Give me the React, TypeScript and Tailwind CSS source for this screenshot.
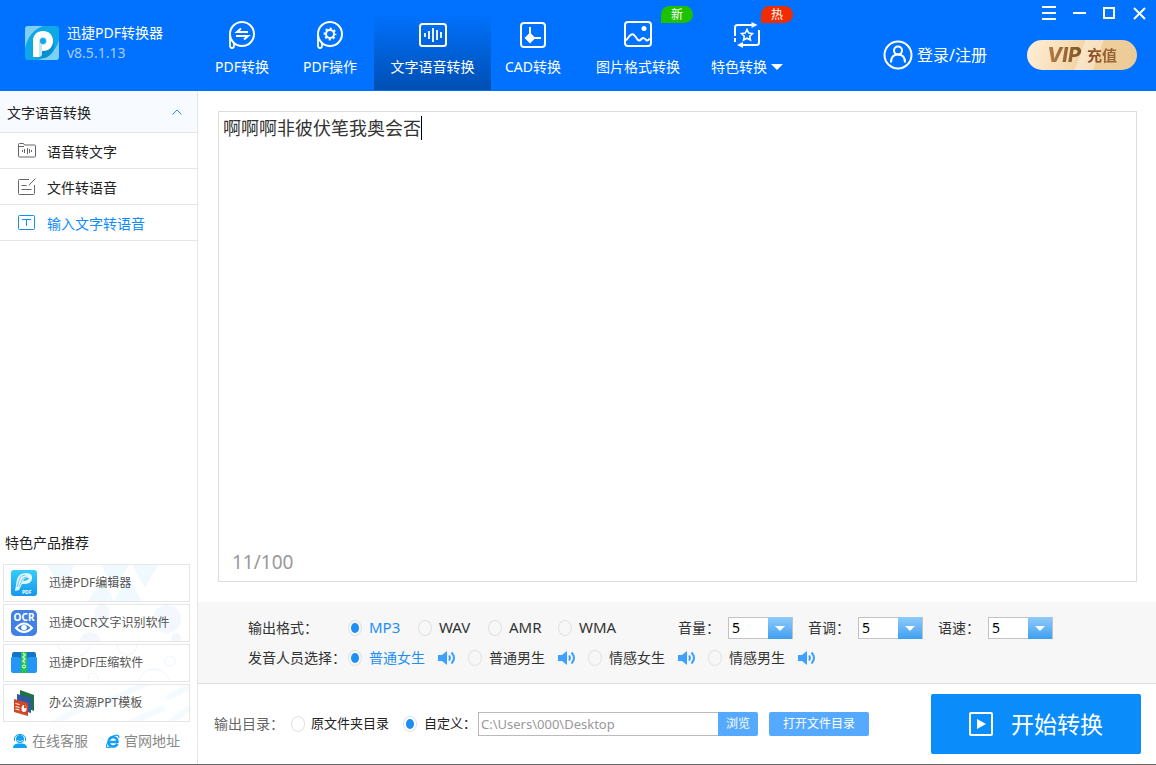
import React, { useState } from 'react'
import clsx from 'clsx'

/* ------------------------------ icons ------------------------------ */
const stroke = { fill: 'none', stroke: 'currentColor', strokeWidth: 2 }

function BubbleIcon({ children }: { children: React.ReactNode }) {
  return (
    <svg width="28" height="28" viewBox="0 0 28 28" {...stroke}>
      <circle cx="14" cy="13" r="12" />
      <path d="M2 13v11.500q0 2.500 2 2.500t2-2.500V22" strokeWidth="1.800" />
      {children}
    </svg>
  )
}

function ConvertIcon() {
  return (
    <BubbleIcon>
      <path d="M20 11H9l4-3.500M8 15h12l-4 3.500" />
    </BubbleIcon>
  )
}

function OperateIcon() {
  return (
    <BubbleIcon>
      <circle cx="14" cy="13" r="4" />
      <circle cx="14" cy="13" r="5.500" strokeWidth="1.800" strokeDasharray="2.160 2.160" strokeDashoffset="1.080" />
    </BubbleIcon>
  )
}

function VoiceIcon() {
  return (
    <svg width="28" height="28" viewBox="0 0 28 28" {...stroke}>
      <rect x="1" y="3" width="26" height="22" rx="2.500" />
      <path d="M6 12v4M10 10v8M14 7v14M18 9v10M22 11v6" strokeWidth="1.800" />
    </svg>
  )
}

function CadIcon() {
  return (
    <svg width="28" height="28" viewBox="0 0 28 28" {...stroke}>
      <rect x="2" y="2" width="24" height="24" rx="3" />
      <path d="M11 6v15M6 17h16" />
      <path d="M11 13l4 4-4 4-4-4z" fill="currentColor" />
    </svg>
  )
}

function PictureIcon() {
  return (
    <svg width="28" height="28" viewBox="0 0 28 28" {...stroke}>
      <rect x="1" y="1" width="26" height="24" rx="3" />
      <circle cx="20" cy="7.500" r="2.500" fill="currentColor" stroke="none" />
      <path d="M2 19.500l4-5c2-2 3.500-1.500 5 .5l2.500 3.500c1.500 1.700 2.500 1.200 4-.5 1.500-1.500 2.800-1 4 .5 1.500 1.500 2.500 1.500 4-1" />
    </svg>
  )
}

function FeatureIcon() {
  return (
    <svg width="28" height="28" viewBox="0 0 28 28" {...stroke}>
      <path d="M2 15V6.500Q2 4 4.500 4H19M26 9v12.500q0 2.500-2.500 2.500H9M2 17v4" />
      <path d="M18.500 1l6 3-6 3zM10 21v6l-6-3z" fill="currentColor" stroke="none" />
      <path d="M14 8.500l1.700 3.500 3.800.5-2.800 2.700.7 3.800-3.400-1.800L10.600 19l.7-3.800-2.800-2.700 3.800-.5z" strokeWidth="1.600" />
    </svg>
  )
}

function FolderVoiceIcon() {
  return (
    <svg width="18" height="18" viewBox="0 0 18 18" fill="none" stroke="currentColor">
      <path d="M.5 14V2.500q0-1 1-1h4l1 1.500h10q1 0 1 1v10q0 1-1 1h-15q-1 0-1-1M1 4.500h5" />
      <path d="M4.500 8v2M6.500 7v4M9.500 6v6M11.500 7v4M13.500 8v2" />
    </svg>
  )
}

function FileEditIcon() {
  return (
    <svg width="18" height="18" viewBox="0 0 18 18" fill="none" stroke="currentColor">
      <path d="M11 1.500H1.500q-1 0-1 1v13q0 1 1 1h14q1 0 1-1V7M3.500 7.500h5M3.500 11.500h10M11 7.500l1-1.500 5.500-5.500" />
    </svg>
  )
}

function TextInputIcon() {
  return (
    <svg width="18" height="18" viewBox="0 0 18 18" fill="none" stroke="currentColor">
      <rect x=".5" y="1.500" width="16" height="14" rx="1" />
      <path d="M4 5.500h9M8.500 5.500V12" />
    </svg>
  )
}

function SpeakerIcon() {
  return (
    <svg width="18" height="14" viewBox="0 0 18 14" fill="none" stroke="#3da0ff" strokeWidth="2">
      <path d="M0 4h4l5-4v14l-5-4H0z" fill="#3da0ff" stroke="none" />
      <path d="M11 4.500q1.800 2.500 0 5M13.500 1.500q5 5.500 0 11" />
    </svg>
  )
}

function Logo() {
  return (
    <svg width="34" height="34" viewBox="0 0 34 34">
      <rect width="34" height="34" rx="3" fill="#10a7e6" />
      <path d="M0 3q0-3 3-3h15Q4 5 0 22zM34 14v17q0 3-3 3H14q16-5 20-20z" fill="#7bd0f4" />
      <path d="M17 25q11-2 11-10 4 12-8 17h-6z" fill="#078fd0" />
      <path d="M8 31V15c0-6 4-10 10-10s10 4 10 10-4 10-10 10h-1v2q0 4-4 4z" fill="#fff" />
      <path d="M14 31V15q0-4 4-4t4 4-4 4h-1v8q0 3-3 4z" fill="#c4e7f8" />
      <circle cx="18" cy="15" r="3" fill="#10a7e6" />
    </svg>
  )
}

/* ------------------------------ header ------------------------------ */
const TABS = [
  { label: 'PDF转换', icon: <ConvertIcon />, width: 'w-[88px]' },
  { label: 'PDF操作', icon: <OperateIcon />, width: 'w-[88px]' },
  { label: '文字语音转换', icon: <VoiceIcon />, width: 'w-[117px]' },
  { label: 'CAD转换', icon: <CadIcon />, width: 'w-[84px]' },
  { label: '图片格式转换', icon: <PictureIcon />, width: 'w-[126px]', badge: '新', badgeClass: 'right-2 bg-[#1dc100]' },
  { label: '特色转换', icon: <FeatureIcon />, width: 'w-[92px]', badge: '热', badgeClass: 'right-0 bg-[#f02c00]', more: true },
]

const windowButton = 'flex h-[26px] w-[30px] items-center justify-center'

function Header() {
  const [tab, setTab] = useState('文字语音转换')

  return (
    <header className="flex h-[91px] bg-[#0072ff] text-white">
      <div className="flex w-[198px] shrink-0 gap-2 pl-[25px] pt-[23px]">
        <div className="pt-[3px]">
          <Logo />
        </div>
        <div>
          <h1 className="text-sm leading-5">迅捷PDF转换器</h1>
          <p className="text-sm leading-5 text-[#a9ccff]">v8.5.1.13</p>
        </div>
      </div>

      <nav className="flex shrink-0">
        {TABS.map((t) => (
          <button
            key={t.label}
            type="button"
            onClick={() => setTab(t.label)}
            className={clsx(
              'relative flex h-[90px] flex-col items-center gap-2 pt-[21px] text-sm leading-5',
              t.width,
              tab === t.label && 'bg-linear-to-b from-[#0072ff] from-15% to-[#004fb2]'
            )}
          >
            {t.icon}
            <span className="flex items-center gap-1 whitespace-nowrap">
              {t.label}
              {t.more && (
                <svg width="12" height="6" viewBox="0 0 12 6" fill="currentColor">
                  <path d="M0 0h12L6 6z" />
                </svg>
              )}
            </span>
            {t.badge && (
              <span
                className={clsx(
                  'absolute top-1.5 h-[17px] w-8 rounded-full rounded-bl-none text-xs leading-[17px]',
                  t.badgeClass
                )}
              >
                {t.badge}
              </span>
            )}
          </button>
        ))}
      </nav>

      <div className="ml-auto flex flex-col items-end gap-[14px]">
        <div className="flex pr-0.5">
          <button type="button" aria-label="菜单" className={windowButton}>
            <svg width="14" height="14" viewBox="0 0 14 14" {...stroke}>
              <path d="M0 1h14M0 7h14M0 13h14" />
            </svg>
          </button>
          <button type="button" aria-label="最小化" className={windowButton}>
            <svg width="14" height="14" viewBox="0 0 14 14" {...stroke}>
              <path d="M1 7h13" />
            </svg>
          </button>
          <button type="button" aria-label="最大化" className={windowButton}>
            <svg width="14" height="14" viewBox="0 0 14 14" {...stroke}>
              <path d="M2 2h10v10H2z" />
            </svg>
          </button>
          <button type="button" aria-label="关闭" className={windowButton}>
            <svg width="14" height="14" viewBox="0 0 14 14" {...stroke}>
              <path d="M2 2l11 11M13 2L2 13" />
            </svg>
          </button>
        </div>

        <div className="flex items-center gap-10 pr-[19px]">
          <a href="#login" className="flex items-center gap-1 whitespace-nowrap text-base leading-6">
            <svg width="30" height="30" viewBox="0 0 30 30" {...stroke}>
              <circle cx="15" cy="15" r="13.500" />
              <circle cx="15" cy="10.500" r="4" />
              <path d="M8 22.500q0-8 7-8t7 8" />
            </svg>
            登录/注册
          </a>
          <button
            type="button"
            className="flex h-[30px] w-[110px] items-center justify-center gap-1 rounded-full bg-[linear-gradient(110deg,#ffefd8_0%,#f3d6a9_48%,#f9e5c8_49%,#f6dfbc_63%,#efd09d_64%,#eacb96_100%)]"
          >
            <span className="bg-linear-to-r from-[#b67d45] to-[#7a5428] bg-clip-text pr-0.5 font-[Inter] text-xl font-extrabold italic leading-6 text-transparent">
              VIP
            </span>
            <span className="bg-linear-to-r from-[#8a4a28] to-[#9a6a38] bg-clip-text text-[15px] font-bold leading-6 text-transparent">
              充值
            </span>
          </button>
        </div>
      </div>
    </header>
  )
}

/* ------------------------------ sidebar ------------------------------ */
const MENU = [
  { label: '语音转文字', icon: <FolderVoiceIcon /> },
  { label: '文件转语音', icon: <FileEditIcon /> },
  { label: '输入文字转语音', icon: <TextInputIcon /> },
]

const PRODUCTS = [
  {
    label: '迅捷PDF编辑器',
    icon: (
      <svg width="26" height="26" viewBox="0 0 26 26">
        <defs>
          <linearGradient id="editor" x1="0" y1="0" x2="0" y2="1">
            <stop stopColor="#35cdfb" />
            <stop offset="1" stopColor="#1598ee" />
          </linearGradient>
        </defs>
        <rect width="26" height="26" rx="3" fill="url(#editor)" />
        <path d="M4 21L6 9q2-6 9-6t6 6q-1 5-8 5h-2l-3 6z" fill="#e3f6ff" />
        <path d="M6 17l2.500-8q1-4 6-4M8 17l3-7q1-3 5-3" fill="none" stroke="#39b8f5" strokeWidth=".7" />
        <path d="M13 9q3-2 5-1-1 3-6 3z" fill="#35b9f5" />
        <text x="11" y="24" fontSize="5" fontWeight="bold" fill="#fff">PDF</text>
      </svg>
    ),
    art: (
      <g fill="#f0f9fd">
        <path d="M43 0h28L57 24zM97 0h28l-14 24zM128 0h26l-13 23zM110 36l14-24 14 24zM84 36l14-22 12 22z" />
      </g>
    ),
  },
  {
    label: '迅捷OCR文字识别软件',
    icon: (
      <svg width="26" height="26" viewBox="0 0 26 26">
        <rect width="26" height="26" rx="5" fill="#4380e6" />
        <text x="13" y="10.500" textAnchor="middle" fontSize="10" fontWeight="bold" fill="#fff">OCR</text>
        <path d="M5 18q8-9 16 0-8 8-16 0z" fill="none" stroke="#fff" strokeWidth="2" />
        <circle cx="13" cy="17.500" r="2.800" fill="#fff" />
      </svg>
    ),
    art: (
      <g fill="#f4f8fe">
        <circle cx="163" cy="14" r="14" />
        <circle cx="98" cy="8" r="8" />
        <circle cx="86" cy="38" r="11" />
        <circle cx="172" cy="33" r="5" />
      </g>
    ),
  },
  {
    label: '迅捷PDF压缩软件',
    icon: (
      <svg width="26" height="26" viewBox="0 0 26 26">
        <path d="M1 4q0-2 2-2h7v5h6V2h7q2 0 2 2v8H1z" fill="#1473cf" />
        <path d="M0 8q0-1 1-1h7l2 2h6l2-2h7q1 0 1 1v13q0 2-2 2H2q-2 0-2-2z" fill="#2397f3" />
        <path d="M10 2h6v21h-6z" fill="#23c64b" />
        <path d="M12 3l2 2-2 2 2 2-2 2 2 2" fill="none" stroke="#d6ffd9" strokeWidth="1.500" />
        <circle cx="13" cy="16.500" r="1.500" fill="none" stroke="#fff" />
      </svg>
    ),
    art: (
      <g fill="none" stroke="#ecf5fd">
        <circle cx="70" cy="-5" r="17" />
        <circle cx="89" cy="33" r="5" />
        <circle cx="150" cy="40" r="16" />
        <circle cx="166" cy="16" r="5" />
        <circle cx="123" cy="0" r="10" />
      </g>
    ),
  },
  {
    label: '办公资源PPT模板',
    icon: (
      <svg width="26" height="26" viewBox="0 0 26 26">
        <path d="M9 0l14 5v16L9 15z" fill="#217346" />
        <path d="M6 4l14 4v15L6 19z" fill="#2c5aa5" />
        <path d="M3 9l14 4v13L3 22z" fill="#d24726" />
        <path d="M4.500 13.500l4 1M4.500 16.500l4 1M4.500 19l4 1" stroke="#fff" />
        <ellipse cx="13" cy="18.500" rx="2.500" ry="3.500" fill="#fff" />
        <path d="M13 18.500v-4l3 3z" fill="#d24726" />
      </svg>
    ),
    art: (
      <g stroke="#f4fafe" strokeWidth="6" strokeLinecap="round">
        <path d="M50 38L80 22M100 18L150 -5M125 38L158 24M165 38L190 20M165 12L185 2" />
      </g>
    ),
  },
]

function Sidebar() {
  const [open, setOpen] = useState(true)
  const [active, setActive] = useState('输入文字转语音')

  return (
    <aside className="flex w-[198px] shrink-0 flex-col border-r border-[#e6e6e6] text-[#222]">
      <button
        type="button"
        onClick={() => setOpen(!open)}
        className="flex h-[42px] items-center justify-between border-b border-[#e6e6e6] bg-[#f7faff] pl-[7px] pr-[15px] text-sm"
      >
        <span className="pt-0.5">文字语音转换</span>
        <svg width="10" height="6" viewBox="0 0 10 6" fill="none" stroke="#1e90ff" className={open ? '' : 'rotate-180'}>
          <path d="M.5 5.500L5 1l4.500 4.500" />
        </svg>
      </button>

      {open && (
        <ul>
          {MENU.map((m) => (
            <li key={m.label} className="border-b border-[#e6e6e6]">
              <button
                type="button"
                onClick={() => setActive(m.label)}
                className={clsx(
                  'flex h-[35px] w-full items-center gap-[11px] pl-[18px] text-sm',
                  active === m.label && 'text-[#0f8cff]'
                )}
              >
                <span className={active === m.label ? '' : 'text-[#666]'}>{m.icon}</span>
                <span className="pt-0.5">{m.label}</span>
              </button>
            </li>
          ))}
        </ul>
      )}

      <section className="mt-auto">
        <h2 className="pl-[5px] text-sm leading-5">特色产品推荐</h2>
        <ul className="mt-[11px] flex flex-col gap-0.5 pl-[3px] pr-[7px]">
          {PRODUCTS.map((p) => (
            <li key={p.label}>
              <a
                href="#product"
                className="relative flex h-[38px] items-center gap-3 overflow-hidden border border-[#e6e6e6] pl-[7px] text-xs text-[#555]"
              >
                <svg className="absolute inset-0" width="187" height="36" viewBox="0 0 187 36">
                  {p.art}
                </svg>
                <span className="relative">{p.icon}</span>
                <span className="relative">{p.label}</span>
              </a>
            </li>
          ))}
        </ul>
        <div className="flex h-[42px] items-center justify-between pl-[13px] pr-[17px] pb-1 text-sm text-[#888]">
          <a href="#service" className="flex items-center gap-[5px]">
            <svg width="14" height="14" viewBox="0 0 14 14" fill="#12a0f5">
              <circle cx="7" cy="5" r="4" />
              <path d="M1.500 7V5q0-4.500 5.500-4.500T12.500 5v2" fill="none" stroke="#12a0f5" />
              <path d="M0 14q0-4 4.500-4.500h5Q14 10 14 14z" />
              <path d="M4 6.500q3 2 6 0" fill="none" stroke="#bfe6ff" />
            </svg>
            在线客服
          </a>
          <a href="#website" className="flex items-center gap-1">
            <svg width="14" height="14" viewBox="0 0 14 14" fill="none" stroke="#12a0f5">
              <path d="M11.500 10q-1.500 2.500-4.500 2.500-4 0-4.500-4.500Q3 3.500 7 3q4.500.5 4.500 5H4" strokeWidth="2.600" />
              <path d="M6 2.500Q13-1 13 4M2 8q-3 5.500 0 5.500 1.500 0 3-1" strokeWidth="1.200" />
            </svg>
            官网地址
          </a>
        </div>
      </section>
    </aside>
  )
}

/* ------------------------------ settings ------------------------------ */
const radioClass = `
  grid h-4 w-[14px] shrink-0 appearance-none place-items-center rounded-[50%]
  border border-[#e2e2e2] checked:before:h-[10px] checked:before:w-2
  checked:before:rounded-[50%] checked:before:bg-[#1e8ef5] checked:before:content-['']
`

const FORMATS = ['MP3', 'WAV', 'AMR', 'WMA']
const VOICES = ['普通女生', '普通男生', '情感女生', '情感男生']
const LEVELS = ['音量：', '音调：', '语速：']

function LevelSelect({ label }: { label: string }) {
  return (
    <label className="flex w-[130px] shrink-0 items-center">
      <span className="w-[50px] whitespace-nowrap">{label}</span>
      <span className="relative h-[22px] w-[65px]">
        <select
          defaultValue="5"
          className="block h-[22px] w-full appearance-none border border-[#c3c3c3] bg-white pl-[3px] text-sm leading-5 text-black"
        >
          {[1, 2, 3, 4, 5, 6, 7, 8, 9].map((n) => (
            <option key={n}>{n}</option>
          ))}
        </select>
        <span className="pointer-events-none absolute right-px top-0 flex h-[22px] w-6 items-center justify-center bg-linear-to-b from-[#8ecbfb] to-[#3c9ff0]">
          <svg width="10" height="5" viewBox="0 0 10 5" fill="#fff">
            <path d="M0 0h10L5 5z" />
          </svg>
        </span>
      </span>
    </label>
  )
}

function Settings() {
  const [format, setFormat] = useState('MP3')
  const [voice, setVoice] = useState('普通女生')

  return (
    <section className="border-b border-[#ddd] bg-[#f7f7f7] pb-[10px] pl-[50px] pt-[11px] text-sm text-[#333]">
      <div className="flex h-[30px] items-center">
        <span className="w-[100px] shrink-0">输出格式：</span>
        <div className="mr-[50px] flex">
          {FORMATS.map((f) => (
            <label key={f} className="flex w-[70px] items-center gap-[7px] text-[15px]">
              <input
                type="radio"
                name="format"
                checked={format === f}
                onChange={() => setFormat(f)}
                className={radioClass}
              />
              <span className={format === f ? 'text-[#1e8ef5]' : ''}>{f}</span>
            </label>
          ))}
        </div>
        {LEVELS.map((l) => (
          <LevelSelect key={l} label={l} />
        ))}
      </div>

      <div className="flex h-[30px] items-center">
        <span className="w-[100px] shrink-0 whitespace-nowrap">发音人员选择：</span>
        {VOICES.map((v) => (
          <div key={v} className="flex w-[120px] items-center gap-[13px]">
            <label className="flex items-center gap-[7px] whitespace-nowrap">
              <input
                type="radio"
                name="voice"
                checked={voice === v}
                onChange={() => setVoice(v)}
                className={radioClass}
              />
              <span className={voice === v ? 'text-[#1e8ef5]' : ''}>{v}</span>
            </label>
            <button type="button" aria-label={`试听${v}`}>
              <SpeakerIcon />
            </button>
          </div>
        ))}
      </div>
    </section>
  )
}

/* ------------------------------ output ------------------------------ */
function OutputBar() {
  const [custom, setCustom] = useState(true)

  return (
    <section className="flex h-20 items-center pl-4 pr-[15px] text-[13px] text-[#222]">
      <span className="w-[77px] shrink-0 text-sm text-[#666]">输出目录：</span>
      <label className="flex w-[112px] shrink-0 items-center gap-1.5">
        <input type="radio" name="dir" checked={!custom} onChange={() => setCustom(false)} className={radioClass} />
        原文件夹目录
      </label>
      <label className="flex w-[75px] shrink-0 items-center gap-[7px] whitespace-nowrap">
        <input type="radio" name="dir" checked={custom} onChange={() => setCustom(true)} className={radioClass} />
        自定义：
      </label>
      <input
        type="text"
        aria-label="自定义目录"
        defaultValue="C:\Users\000\Desktop"
        className="h-6 w-60 border border-r-0 border-[#bbb] px-0.5 text-[13px] text-[#999] outline-none"
      />
      <button type="button" className="h-6 w-10 shrink-0 rounded-r-xs bg-[#55aaff] text-xs text-white">
        浏览
      </button>
      <button type="button" className="ml-[11px] h-6 w-[100px] shrink-0 rounded-xs bg-[#55aaff] text-xs text-white">
        打开文件目录
      </button>
      <button
        type="button"
        className="ml-auto flex h-[60px] w-[210px] shrink-0 items-center justify-center gap-[18px] rounded-xs bg-[#0a8dfa] text-[23px] text-white"
      >
        <svg width="24" height="24" viewBox="0 0 24 24" {...stroke}>
          <rect x="1" y="1" width="22" height="22" rx="1" />
          <path d="M8 7l9 5-9 5z" fill="currentColor" stroke="none" />
        </svg>
        开始转换
      </button>
    </section>
  )
}

function Editor() {
  const [text, setText] = useState('啊啊啊非彼伏笔我奥会否')

  return (
    <div className="relative my-5 ml-5 mr-[19px] flex grow">
      <textarea
        aria-label="输入文字"
        maxLength={100}
        value={text}
        onChange={(e) => setText(e.target.value)}
        className="w-full resize-none border border-[#ddd] px-1 py-1 text-lg leading-6 text-[#333] caret-transparent outline-none"
      />
      {/* caret sits right after the last character */}
      <div className="pointer-events-none absolute left-[5px] top-[5px] flex text-lg leading-6">
        <span className="invisible" aria-hidden="true">{text}</span>
        <span className="h-6 w-px bg-black" />
      </div>
      <span className="absolute bottom-1.5 left-[14px] text-[19px] leading-7 text-[#999]">{text.length}/100</span>
    </div>
  )
}

export default function App() {
  return (
    <div className="flex min-h-screen flex-col border-b border-[#666] bg-white font-['Noto_Sans','Noto_Sans_CJK_SC',sans-serif]">
      <Header />
      <div className="flex grow">
        <Sidebar />
        <main className="flex min-w-0 grow flex-col">
          <Editor />
          <Settings />
          <OutputBar />
        </main>
      </div>
    </div>
  )
}
